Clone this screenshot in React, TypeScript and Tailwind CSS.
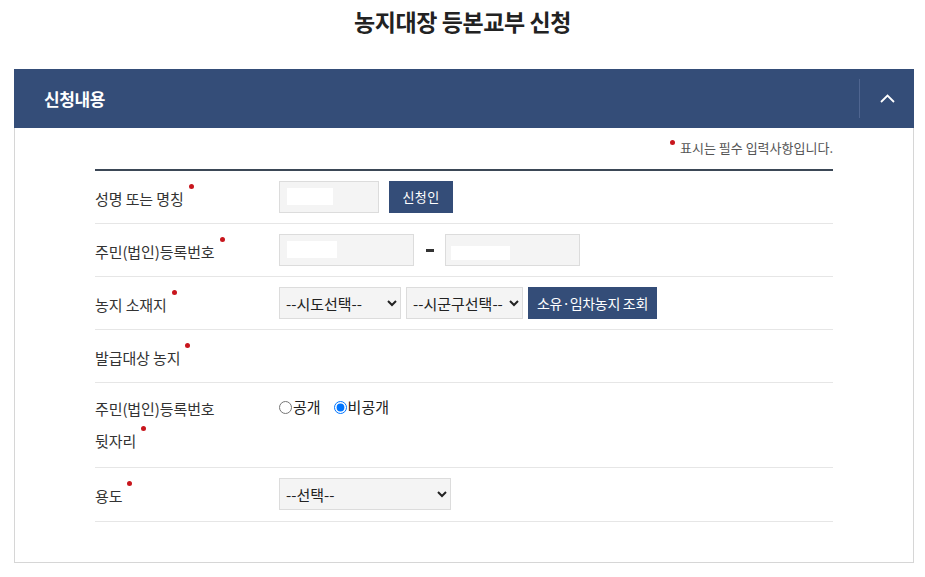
import React from 'react';

const Dot = ({ raise = 'align-[16px]' }: { raise?: string }) => (
  <span className={`inline-block w-[5px] h-[5px] rounded-full bg-[#c8161d] ml-[5px] ${raise}`} />
);

const Row = ({ label, children, tall, extra }: { label: React.ReactNode; children?: React.ReactNode; tall?: boolean; extra?: string }) => (
  <div className={`flex border-b border-[#e6e6e6] py-[10px] ${extra ?? ''}`}>
    <div className={`w-[184px] shrink-0 flex items-center text-[15px] tracking-[-0.1px] text-[#333] ${tall ? 'leading-[32px]' : 'leading-[22px]'}`}>
      <div>{label}</div>
    </div>
    <div className={`flex gap-[5px] ${tall ? 'items-start' : 'items-center'} min-h-[32px]`}>{children}</div>
  </div>
);

const Field = ({ w, mask, maskW, maskTop }: { w: string; mask: string; maskW: string; maskTop: string }) => (
  <div className={`${w} h-[32px] bg-[#f4f4f4] border border-[#dcdcdc]`}>
    <div className={`bg-white h-[17px] ${mask} ${maskW} ${maskTop}`} />
  </div>
);

const selectCls =
  'h-[32px] bg-[#f4f4f4] border border-[#dcdcdc] text-[15px] text-[#222] pl-[2px] outline-none';

export default function App() {
  return (
    <div className="min-h-[577px] bg-white" style={{ fontFamily: '"Noto Sans CJK KR", "Noto Sans", sans-serif' }}>
      <h1 className="text-center text-[23px] font-bold tracking-[-0.4px] text-[#222] leading-[30px] pt-[6px] h-[69px]">
        농지대장 등본교부 신청
      </h1>

      <div className="ml-[14px] w-[900px]">
        <div className="h-[59px] bg-[#344d78] flex items-center">
          <h2 className="flex-1 pl-[30px] text-white text-[17px] font-bold tracking-[-0.4px]">신청내용</h2>
          <div className="h-[39px] border-l border-[#4f6590]" />
          <button className="w-[54px] h-full flex items-center justify-center">
            <svg width="15" height="9" viewBox="0 0 15 9" fill="none">
              <path d="M1 8 L7.5 1.5 L14 8" stroke="white" strokeWidth="1.8" />
            </svg>
          </button>
        </div>

        <div className="border-x border-b border-[#d6d6d6] px-[80px] pb-[40px]">
          <p className="pt-[10px] mb-[11px] text-right text-[13px] leading-[20px] text-[#555]">
            <span className="inline-block w-[5px] h-[5px] rounded-full bg-[#c8161d] mr-[5px] align-[8px]" />
            표시는 필수 입력사항입니다.
          </p>
          <div className="border-t-2 border-[#3b4756]">
            <Row label={<>성명 또는 명칭<Dot /></>}>
              <Field w="w-[100px]" mask="ml-[7px]" maskW="w-[46px]" maskTop="mt-[6px]" />
              <button className="ml-[5px] h-[32px] w-[64px] bg-[#344d78] text-white text-[13px] tracking-[0.3px]">신청인</button>
            </Row>
            <Row label={<>주민(법인)등록번호<Dot /></>}>
              <Field w="w-[135px]" mask="ml-[7px]" maskW="w-[50px]" maskTop="mt-[6px]" />
              <div className="w-[21px] flex justify-center">
                <div className="w-[8px] h-[3px] bg-[#333]" />
              </div>
              <Field w="w-[135px]" mask="ml-[5px]" maskW="w-[59px]" maskTop="mt-[11px] !h-[14px]" />
            </Row>
            <Row label={<>농지 소재지<Dot /></>}>
              <select className={`${selectCls} w-[122px]`} defaultValue="">
                <option value="">--시도선택--</option>
              </select>
              <select className={`${selectCls} w-[117px]`} defaultValue="">
                <option value="">--시군구선택--</option>
              </select>
              <button className="h-[32px] w-[129px] bg-[#344d78] text-white text-[14px] tracking-[-0.3px]">
                소유·임차농지 조회
              </button>
            </Row>
            <Row label={<>발급대상 농지<Dot /></>} />
            <Row
              tall
              label={
                <>
                  주민(법인)등록번호
                  <br />
                  뒷자리<Dot raise="align-[16px]" />
                </>
              }
            >
              <div className="flex items-center h-[28px] text-[15px] text-[#222]">
                <label className="flex items-center">
                  <input type="radio" name="open" className="w-[13px] h-[13px] m-0 mr-[1px]" />
                  공개
                </label>
                <label className="flex items-center ml-[13px]">
                  <input type="radio" name="open" defaultChecked className="w-[13px] h-[13px] m-0 mr-[1px]" />
                  비공개
                </label>
              </div>
            </Row>
            <Row extra="pb-[11px]" label={<>용도<Dot /></>}>
              <select className={`${selectCls} w-[172px]`} defaultValue="">
                <option value="">--선택--</option>
              </select>
            </Row>
          </div>
        </div>
      </div>
    </div>
  );
}
